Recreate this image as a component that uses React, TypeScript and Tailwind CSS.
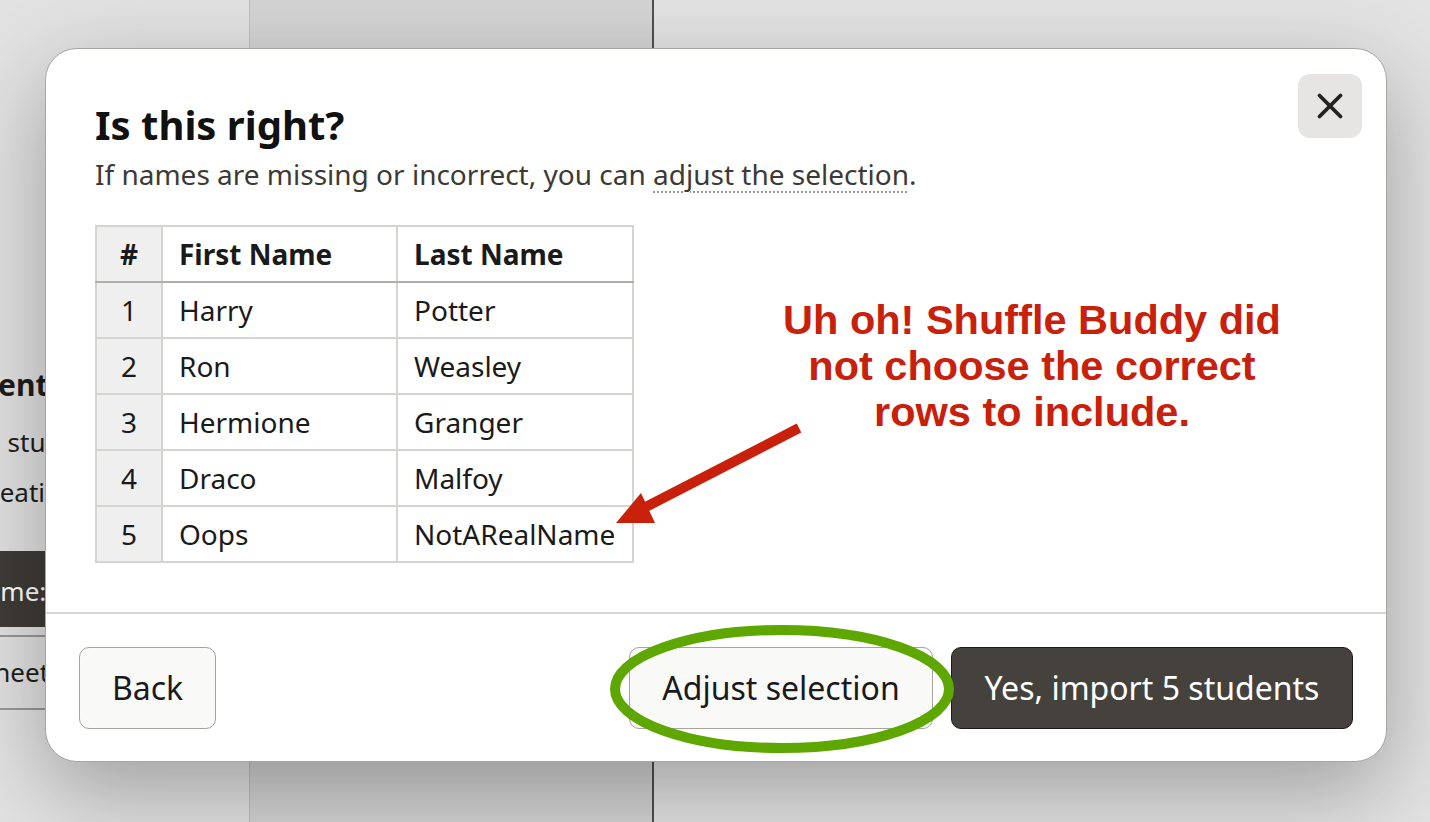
import { X } from "lucide-react";

const students = [
  { id: 1, first: "Harry", last: "Potter" },
  { id: 2, first: "Ron", last: "Weasley" },
  { id: 3, first: "Hermione", last: "Granger" },
  { id: 4, first: "Draco", last: "Malfoy" },
  { id: 5, first: "Oops", last: "NotARealName" },
];

function Backdrop() {
  return (
    <div className="flex h-full w-full">
      <div className="flex w-[249px] flex-col overflow-hidden pt-[365px] text-[#1f1d1b]">
        <div className="-ml-[70px] whitespace-nowrap text-[30px] font-bold leading-[39px]">Students</div>
        <div className="mt-[13px] text-[26px] leading-[50px]">
          <div className="-ml-[66px] whitespace-nowrap">Paste students from</div>
          <div className="-ml-[23px] whitespace-nowrap">creating a list</div>
        </div>
        <div className="mt-[34px] flex h-[76px] items-center bg-[#3f3b37] pt-[4px] text-[26px] text-white">
          <span className="-ml-[34px] whitespace-nowrap">Name:</span>
        </div>
        <div className="mt-[8px] flex h-[75px] items-center border-y-2 border-[#9a9896] text-[26px]">
          <span className="-ml-[20px] whitespace-nowrap">Sheets</span>
        </div>
      </div>
      <div className="w-[405px] border-r-2 border-l border-r-[#4f4f4f] border-l-[#bdbdbd] bg-[#d4d4d4]" />
      <div className="flex-1 bg-[#e3e3e3]" />
    </div>
  );
}

export default function App() {
  return (
    <div className="relative h-[822px] w-[1430px] overflow-hidden bg-[#e2e2e2] font-['Noto_Sans',sans-serif]">
      <Backdrop />

      <div className="absolute left-[45px] top-[48px] flex h-[714px] w-[1342px] flex-col rounded-[32px] border border-[#a9a6a2] bg-white shadow-[0_30px_90px_rgba(0,0,0,0.3)]">
        <button
          type="button"
          aria-label="Close"
          className="absolute right-[24px] top-[25px] grid h-[64px] w-[64px] place-items-center rounded-[12px] bg-[#e6e5e3] text-[#222]"
        >
          <X className="h-[42px] w-[42px]" strokeWidth={2.2} />
        </button>

        <div className="flex-1 px-[49px] pt-[52px]">
          <h1 className="text-[40px] font-bold leading-[48px] text-[#111]">Is this right?</h1>
          <p className="mt-[6px] text-[28px] leading-[39px] text-[#3d3a36]">
            If names are missing or incorrect, you can{" "}
            <span className="underline decoration-[#9a9794] decoration-dotted decoration-2 underline-offset-[6px]">
              adjust the selection
            </span>
            .
          </p>

          <table className="mt-[31px] border-collapse text-[28px] text-[#1a1a1a]">
            <thead>
              <tr className="h-[56px]">
                <th className="w-[66px] border-2 border-b-2 border-[#d6d4d1] border-b-[#b0aeab] bg-[#efefef] text-center font-bold">#</th>
                <th className="w-[235px] border-2 border-b-2 border-[#d6d4d1] border-b-[#b0aeab] pl-[16px] text-left font-bold">First Name</th>
                <th className="w-[236px] border-2 border-b-2 border-[#d6d4d1] border-b-[#b0aeab] pl-[16px] text-left font-bold">Last Name</th>
              </tr>
            </thead>
            <tbody>
              {students.map((s) => (
                <tr key={s.id} className="h-[56px]">
                  <td className="border-2 border-[#d6d4d1] bg-[#efefef] text-center">{s.id}</td>
                  <td className="border-2 border-[#d6d4d1] pl-[16px]">{s.first}</td>
                  <td className="border-2 border-[#d6d4d1] pl-[16px]">{s.last}</td>
                </tr>
              ))}
            </tbody>
          </table>
        </div>

        <div className="flex items-center border-t-2 border-[#d9d7d4] px-[33px] pb-[32px] pt-[33px] text-[32px]">
          <button type="button" className="h-[82px] rounded-[10px] border-[1.5px] border-[#a7a39f] bg-[#f9f9f8] px-[32px] text-[#1a1a1a]">
            Back
          </button>
          <div className="ml-auto flex gap-[18px]">
            <button type="button" className="h-[82px] w-[304px] rounded-[10px] border-[1.5px] border-[#a7a39f] bg-[#f9f9f8] text-[#1a1a1a]">
              Adjust selection
            </button>
            <button type="button" className="h-[82px] w-[402px] rounded-[10px] border-[1.5px] border-[#1d1b19] bg-[#45423d] text-white">
              Yes, import 5 students
            </button>
          </div>
        </div>
      </div>

      {/* annotation overlay */}
      <div className="absolute left-[752px] top-[297px] w-[560px] text-center font-['Liberation_Sans',Arial,sans-serif] text-[41.5px] font-bold leading-[46px] text-[#c8200a]">
        Uh oh! Shuffle Buddy did
        <br />
        not choose the correct
        <br />
        rows to include.
      </div>

      <svg className="pointer-events-none absolute left-0 top-0" width="1430" height="822" viewBox="0 0 1430 822">
        <line x1="799" y1="428" x2="640" y2="510" stroke="#c8200a" strokeWidth="10" />
        <polygon points="616,523 641,493 655,523" fill="#c8200a" />
        <ellipse cx="782" cy="689" rx="167" ry="59" fill="none" stroke="#5ea600" strokeWidth="10" />
      </svg>
    </div>
  );
}
